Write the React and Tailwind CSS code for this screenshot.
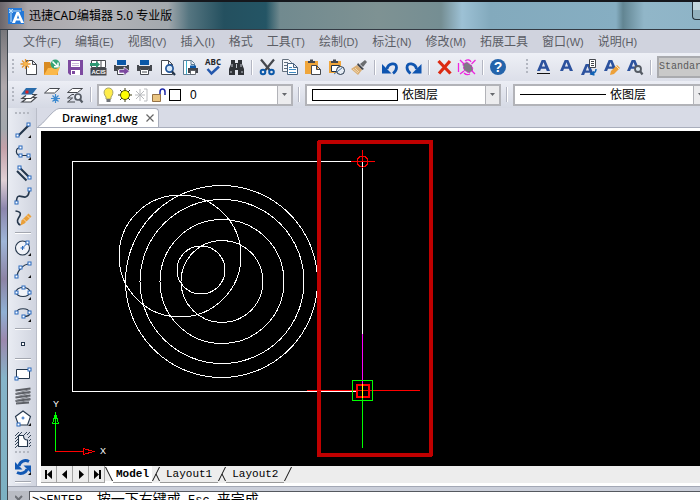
import React from "react";

const NAVY = "#24364b";
const BLUE = "#0b58a8";
const DARK = "#45484e";

/* ---------- toolbar glyphs, drawn on a 23 x 20 grid ---------- */

function Glyph({ children }) {
  return (
    <svg width="23" height="20" viewBox="0 0 23 20" fill="none" aria-hidden="true">
      {children}
    </svg>
  );
}

const Printer = () => (
  <>
    <path d="M7 3h9v5H7z" fill={BLUE} />
    <path d="M4 8h2v1h11V8h2v6h-3v-2H7v2H4z" fill={DARK} />
    <path d="M7.500 12.500h8v5h-8z" fill="#fff" stroke={DARK} />
    <path d="M9 15h5" stroke={DARK} />
  </>
);

const Page = () => <path d="M5.500 3.500h7l4 4v10h-11zM12.500 3.500v4h4" fill="#fff" stroke={DARK} />;

const LetterA = () => (
  <path d="M5 14 9.700 3h3.600L18 14h-3.200l-.9-2.300H9L8.100 14zM9.900 9.500h3.200l-1.600-4.300z" fill="#2c529e" fillRule="evenodd" />
);

const fileTools = [
  ["新建", <>
    <path d="M8.500 3.500h6l4 4v10h-10zM14.500 3.500v4h4" fill="#fff" stroke={DARK} />
    <path d="M7.500 2v10M2.500 7h10M4 3.500l7 7M11 3.500l-7 7" stroke="#e7962f" strokeWidth="1.300" />
    <circle cx="7.500" cy="7" r="2" fill="#f7b54a" />
  </>],
  ["打开", <>
    <path d="M3 5h6l1 2h7v11H3z" fill="#d98b22" />
    <path d="M7 11h3l1-1h8l-3 8H3z" fill="#fbb84a" />
    <circle cx="14.300" cy="7.300" r="4.700" fill="#33a577" />
    <path d="M11.500 4.500l5 5M17 5.500v4.200h-4" stroke="#fff" strokeWidth="1.500" />
  </>],
  ["保存", <>
    <path d="M4 3h15v15H6l-2-2z" fill="#7d4aa0" />
    <path d="M7 4h9v6H7zM7 13h9v5H7z" fill="#fff" />
    <path d="M8 14h3v3H8z" fill="#7d4aa0" />
    <path d="M8 6.500h7M8 8.500h7" stroke="#cbb9d9" />
  </>],
  ["ACIS 导入", <>
    <path d="M4.500 3.500h14v7h-14zM10 3.500v7M14 3.500v7" fill="#fff" stroke={DARK} />
    <path d="M3 6h6V4l4 3.500L9 11V9H3z" fill="#2d9873" />
    <path d="M3.500 11h16v7.500h-16z" fill={DARK} />
    <text x="4.500" y="17" fill="#fff" fontSize="6" fontWeight="700" fontFamily="Liberation Sans">ACIS</text>
  </>],
  ["输出", <>
    <Printer />
    <path d="M9 12.500h5V10l5.500 4.200-5.500 4.300V16H9z" fill="#7d4aa0" stroke="#eef0f6" strokeWidth=".7" />
  </>],
  ["打印", <Printer />],
  ["打印预览", <>
    <Page />
    <circle cx="13.500" cy="11.500" r="3.600" fill="#d8e8f7" stroke="#24579b" strokeWidth="1.700" />
    <path d="M16 14.500l3 3.500" stroke="#24364b" strokeWidth="2.200" />
  </>],
  ["页面设置", <>
    <path d="M4.500 3.500h8l3 3v11h-11zM12 3.500v4h3.500" fill="#fff" stroke="#5d7d95" />
    <path d="M7.500 4v13" stroke="#3db0cc" />
    <path d="M11 8.500h6V11h-6z" fill={BLUE} />
    <path d="M9 11h10v5H9z" fill={DARK} />
    <path d="M11.500 13.500h5v4h-5z" fill="#fff" stroke={DARK} strokeWidth=".7" />
  </>],
  ["拼写检查", <>
    <text x="11" y="8" textAnchor="middle" fill="#22252a" fontSize="8" fontWeight="700" fontFamily="Open Sans">ABC</text>
    <path d="M5.500 12l4 4.500 7.500-7" stroke="#2458ad" strokeWidth="2.500" />
  </>],
  ["查找", <>
    <path d="M6 3h4v3h3V3h4v4l2 5v6h-6v-5h-3v5H4v-6l2-5z" fill="#303338" />
    <path d="M7 7v3M16 7v3M6 14v2M17 14v2M11.500 7v4" stroke="#c2c7cf" />
  </>],
];

const editTools = [
  ["剪切", <>
    <path d="M5 2.500l9 11M18 2.500l-9 11" stroke={DARK} strokeWidth="2.200" />
    <circle cx="7" cy="15" r="2.300" stroke={BLUE} strokeWidth="2" />
    <circle cx="15.500" cy="15" r="2.300" stroke={BLUE} strokeWidth="2" />
  </>],
  ["复制", <>
    <path d="M3.500 2.500h6l3 3v9h-9z" fill="#f5f7fa" stroke="#64707d" />
    <path d="M5 5.500h4M5 8.500h4M5 11.500h4" stroke="#64707d" />
    <path d="M8.500 6.500h6l4 4v7h-10zM14.500 6.500v4h4" fill="#fff" stroke="#48627e" />
    <path d="M10 10.500h3M10 12.500h7M10 15.500h7" stroke="#3e89c1" />
  </>],
  ["粘贴", <>
    <path d="M3 4h13v13H3z" fill="#f0a63b" />
    <path d="M6 6V4h2V2.500h3V4h2v2z" fill={DARK} />
    <path d="M9.500 8.500h5l4 4v5h-9zM14.500 8.500v4h4" fill="#fff" stroke={DARK} />
  </>],
  ["粘贴为块", <>
    <path d="M4 4h12v12H4z" fill="#f0a63b" />
    <path d="M6 6V4h2V2.500h3V4h2v2z" fill={DARK} />
    <path d="M6.500 8.500h8l-2 6h-6z" fill="#fff" stroke={NAVY} />
    <circle cx="15.500" cy="13.500" r="4" fill="#e7edf5" stroke={NAVY} />
    <path d="M9 17l8-6" stroke="#527ca4" />
  </>],
  ["格式刷", <>
    <path d="M17 3l2 2-4 5-3-3z" fill="#6b6d70" />
    <path d="M10 6l6 6-2 1-5-5z" fill={DARK} />
    <path d="M9 8l5 5-4 5-7-6z" fill="#d9ae74" />
    <path d="M5 12l5 4M7 11l4 4" stroke="#f2d7ad" />
  </>],
];

const undoTools = [
  ["撤销", <>
    <path d="M8 12C9 6.500 17.500 4.500 17.500 10.500c0 2.500-1.500 4.500-3.500 6" stroke="#0f55b0" strokeWidth="2.800" />
    <path d="M3 7v9.500h9.500z" fill="#0f55b0" />
  </>],
  ["重做", <>
    <path d="M14.500 12C13.500 6.500 5 4.500 5 10.500c0 2.500 1.500 4.500 3.500 6" stroke="#0f55b0" strokeWidth="2.800" />
    <path d="M19.500 7v9.500H10z" fill="#0f55b0" />
  </>],
];

const eraseTools = [
  ["删除", <path d="M5.500 4l12 12.500M17 4L6 16.500" stroke="#dc2a12" strokeWidth="3.200" />],
  ["清理", <>
    <path d="M4 3l4 4M2.500 6v9M4 17l4-3M19.500 3l-4 4M19 17l-4-4M9 4c3-2 5-1 6 1M8 16c2 2 4 2 6 1" stroke="#ee25df" strokeWidth="1.300" />
    <path d="M7 7l4-2 5 4 1 4-4 3-5-3z" fill="#807a85" stroke="#e622d9" strokeDasharray="2 1" />
  </>],
];

const helpTools = [
  ["帮助", <>
    <circle cx="11" cy="10" r="8" fill="#2464ab" />
    <text x="11" y="15" textAnchor="middle" fontSize="14" fontWeight="700" fill="#fff" fontFamily="Liberation Sans">?</text>
  </>],
];

const textTools = [
  ["多行文字", <><LetterA /><path d="M5 16.500h13" stroke="#111" /></>],
  ["单行文字", <LetterA />],
  ["文字样式", <>
    <g transform="translate(-2 4)"><LetterA /></g>
    <path d="M11.500 2.500h6v8h-6z" fill="#fff" stroke={DARK} />
    <path d="M13 4.500h3M13 6.500h3M13 8.500h3" stroke={DARK} />
    <path d="M18 12c0 3-1 4-4 5M16 14.500l-3 2.500 3.500 1" stroke="#1163b5" strokeWidth="1.500" />
  </>],
  ["编辑文字", <>
    <g transform="translate(-2 0)"><LetterA /></g>
    <path d="M16 8l3 3-6 6-4 1 1-4z" fill="#eda13a" />
    <path d="M15 9l3 3" stroke="#fff" strokeWidth=".7" />
  </>],
  ["查找文字", <>
    <g transform="translate(-2 0)"><LetterA /></g>
    <circle cx="14" cy="12" r="3" fill="#d9e5ef" stroke="#555b64" strokeWidth="1.800" />
    <path d="M16 14l2.500 3.500" stroke="#555b64" strokeWidth="2.200" />
  </>],
];

const layerTools = [
  ["图层特性", <>
    <path d="M14 12.500h4l-5 4.500H4l4-3M14 9.500h4l-5 4H4l4-3" fill="#fff" stroke={DARK} strokeWidth="1.200" />
    <path d="M8 3h11l-5 6.500H3z" fill="#2a6cab" />
    <path d="M7.500 5.500h3v3h-3z" fill="#e02020" />
  </>],
  ["冻结图层", <>
    <path d="M8.500 3.500h10l-5 4.500h-10z" fill="#fff" stroke={DARK} />
    <path d="M14.500 9v9M10 13.500h9M11.500 10.500l6 6M17.500 10.500l-6 6" stroke="#3c8ad0" strokeWidth="1.200" />
  </>],
  ["浏览图层", <>
    <path d="M8.500 3.500h10l-5 4h-10z" fill="#fff" stroke={DARK} />
    <path d="M10 9.500H8L3.500 13H9M8 13.500L3.500 17H11" stroke={DARK} />
    <circle cx="14" cy="12" r="3" fill="#eef1f6" stroke="#555b64" strokeWidth="1.700" />
    <path d="M16 14.500l2.500 3" stroke="#555b64" strokeWidth="2.200" />
  </>],
];

/* ---------- drawing palette glyphs, 22 x 22 grid ---------- */

const Node = ({ x, y }) => <rect x={x - 1.500} y={y - 1.500} width="3" height="3" fill="#fff" stroke="#2869bd" />;
const Flyout = () => <path d="M19 16v3h-3z" fill="#111" />;

const lineTools = [
  ["直线", <><path d="M6 17L17 6" stroke={NAVY} strokeWidth="2.200" /><Node x={5.500} y={16.500} /><Node x={16.500} y={5.500} /><Flyout /></>],
  ["多段线", <><path d="M8.500 6.500C3 7 3 14 8.500 14.500h8" stroke={NAVY} strokeWidth="1.200" /><Node x={8.500} y={6.500} /><Node x={8.500} y={14.500} /><Node x={16.500} y={14.500} /><Flyout /></>],
  ["多线", <><path d="M5 8l9.500 9.500M8 5l9 9" stroke={NAVY} strokeWidth="2" /><Node x={7.500} y={4.500} /><Node x={17.500} y={14.500} /></>],
  ["样条曲线", <><path d="M4.500 17c0-10 6-4 9-5 4-1 3-4 4-7" stroke={NAVY} strokeWidth="1.600" /><Node x={4.500} y={17.500} /><Node x={17.500} y={4.500} /></>],
  ["徒手画", <><path d="M3.500 4c7 1 5 4 3 7s-1 6 2 7" stroke={NAVY} strokeWidth="1.600" /><path d="M16.500 6.500l3 3-7 7-4 2 1-5z" fill="#eaa03a" /><path d="M15 8.500l3 3M11.500 12l3 3" stroke="#fff" strokeWidth=".6" /></>],
];
const curveTools = [
  ["圆", <><circle cx="10.500" cy="11" r="7" fill="#f1f3f8" stroke={NAVY} strokeWidth="1.100" /><path d="M10.500 11l5-5M8.500 11h4M10.500 9v4" stroke="#2869bd" /><Node x={15.500} y={5.500} /><Flyout /></>],
  ["圆弧", <><path d="M4.500 18C6 11 10 6 17.500 4.500" stroke={NAVY} strokeWidth="1.200" /><Node x={4.500} y={17.500} /><Node x={8.500} y={8.500} /><Node x={17.500} y={4.500} /><Flyout /></>],
  ["椭圆", <><ellipse cx="11" cy="11" rx="7" ry="4.500" fill="#f1f3f8" stroke={NAVY} strokeWidth="1.100" /><Node x={4.500} y={11.500} /><Node x={11.500} y={6.500} /><Node x={17.500} y={11.500} /><Flyout /></>],
  ["椭圆弧", <><path d="M4.500 9.500c1-5 12-5 13 0 1 3-2 4-6 4" stroke={NAVY} strokeWidth="1.200" /><Node x={4.500} y={9.500} /><Node x={17.500} y={9.500} /><Node x={11.500} y={13.500} /><Flyout /></>],
];
const pointTools = [["点", <rect x="9.500" y="9.500" width="3" height="3" fill="#fff" stroke={NAVY} />]];
const shapeTools = [
  ["矩形", <><path d="M4.500 6.500h13v9h-13z" fill="#fff" stroke={NAVY} /><Node x={4.500} y={15.500} /><Node x={17.500} y={6.500} /></>],
  ["修订云线", <><path d="M3.500 5.500l15-2M3.500 9l15-2M3.500 12.500l15-2M3.500 16l15-2M4 18.500l13-1" stroke="#5c5f65" strokeWidth="2" /><path d="M18 4.500L4 8.500M18 8L4 12M18 11.500L4 15.500M18 15L5 18" stroke="#7f8288" /></>],
  ["多边形", <><path d="M11 4l7.500 5.500L15.500 18H6.500L3.500 9.500z" fill="#fff" stroke={NAVY} strokeWidth="1.100" /><path d="M9.500 11h3M11 9.500v3" stroke="#2869bd" /><Node x={6.500} y={17.500} /><Flyout /></>],
  ["图案填充", <><path d="M3 7l4-4M3 10l7-7M3 13L6 10M3 16l3-3M12 6l3-3M15 6l3-3M3 19l3-3M16 9l3-3M17 12l2-2M17 15l2-2M17 18l2-2" stroke={NAVY} strokeWidth=".9" /><path d="M6.500 6.500h5c0 3 1 4.500 4 4.500v6.500h-9z" fill="#fff" stroke={NAVY} strokeWidth="1.100" /></>],
];
const refreshTools = [
  ["重生成", <>
    <path d="M7 10C8 5 13 3.500 17 5.500" stroke="#1158b4" strokeWidth="3" />
    <path d="M3 6v7.500h7.500z" fill="#1158b4" />
    <path d="M15 13c-1 4-6 5.500-10 3.500" stroke="#1158b4" strokeWidth="3" />
    <path d="M19 17V9.500h-7.500z" fill="#1158b4" />
    <Flyout />
  </>],
];

/* ---------- building blocks ---------- */

function ToolGroup({ tools }) {
  return (
    <div className="flex shrink-0">
      {tools.map(([name, art]) => (
        <button key={name} type="button" aria-label={name} className="block h-5 w-[23px]">
          <Glyph>{art}</Glyph>
        </button>
      ))}
    </div>
  );
}

function PaletteGroup({ tools }) {
  return (
    <div className="flex flex-col">
      {tools.map(([name, art]) => (
        <button key={name} type="button" aria-label={name} className="block size-[22px]">
          <svg width="22" height="22" viewBox="0 0 22 22" fill="none" aria-hidden="true">{art}</svg>
        </button>
      ))}
    </div>
  );
}

const Grip = () => (
  <div className="flex w-2.5 shrink-0 justify-center">
    <div className="h-4 w-0.5 bg-[repeating-linear-gradient(to_bottom,#b3b7c1_0_2px,transparent_2px_4px)]" />
  </div>
);
const Sep = () => (
  <div className="flex w-2 shrink-0 justify-center">
    <div className="h-[15px] w-0.5 border-l border-[#b3b6c2] bg-white" />
  </div>
);
const PaletteSep = () => (
  <div className="flex h-2 items-center">
    <div className="h-0.5 w-4 border-t border-[#a3a7b0] bg-white" />
  </div>
);
const PaletteGrip = () => <div className="h-0.5 w-4 bg-[repeating-linear-gradient(to_right,#b4b8c1_0_2px,transparent_2px_4px)]" />;

function Combo({ label, value, className, children }) {
  return (
    <div className={`flex h-[22px] items-stretch border-2 border-[#b2b3b8] bg-white ${className}`}>
      <div className="flex min-w-0 flex-1 items-center pl-1">
        {children}
        <select aria-label={label} className="h-full min-w-0 flex-1 appearance-none bg-transparent pl-1 text-xs text-black outline-none">
          <option>{value}</option>
        </select>
      </div>
      <div className="flex w-3.5 shrink-0 items-center justify-center border-l border-[#b2b3b8] bg-[#ececee]">
        <svg width="5" height="3" viewBox="0 0 5 3" aria-hidden="true"><path d="M0 0h5L2.500 3z" fill="#66686d" /></svg>
      </div>
    </div>
  );
}

const menus = [
  ["文件", "(F)"], ["编辑", "(E)"], ["视图", "(V)"], ["插入", "(I)"], ["格式", ""], ["工具", "(T)"],
  ["绘制", "(D)"], ["标注", "(N)"], ["修改", "(M)"], ["拓展工具", ""], ["窗口", "(W)"], ["说明", "(H)"],
];

const circles = [
  [221.500, 281.500, 96], [222, 281.500, 82], [222, 281.500, 62], [222, 281.500, 41], [180, 256, 61], [201, 270, 24],
];

function Drawing() {
  return (
    <svg className="block min-h-0 w-full flex-1 bg-black" fill="none" role="img" aria-label="Drawing1.dwg" shapeRendering="crispEdges">
      <g transform="translate(-41 -131)">
        <g stroke="#fff">
          <path d="M362.500 334V161.500H72.500v230H357" />
          {circles.map(([cx, cy, r]) => <circle key={`${cx}-${r}`} cx={cx} cy={cy} r={r} />)}
        </g>
        <rect x="319" y="142" width="112" height="313" stroke="#c00000" strokeWidth="4" strokeLinejoin="round" />
        <g stroke="#f00">
          <circle cx="362.500" cy="161.500" r="5.500" />
          <path d="M351 161.500h24M362.500 150v11M307 390.500h113" />
          <rect x="357" y="385" width="12" height="12" strokeWidth="2" />
        </g>
        <path d="M362.500 334v51" stroke="#f0f" />
        <path d="M362.500 384v14" stroke="#ff0" />
        <path d="M362.500 398v50M352.500 380.500h20v20h-20z" stroke="#0f0" />
        <path d="M55.500 451V413M52.500 423.500h6l-3-10z" stroke="#0f0" />
        <path d="M55 451.500h28M83.500 448.500v6l10-3z" stroke="#f00" />
        <g fill="#fff" fontFamily="Liberation Sans" fontSize="9" textAnchor="middle">
          <text x="56" y="407">Y</text>
          <text x="103" y="454">X</text>
        </g>
      </g>
    </svg>
  );
}

const pagers = [
  ["第一页", "M4 3h2v9H4zM11 3v9L6 7.500z"],
  ["上一页", "M10 3v9L5 7.500z"],
  ["下一页", "M6 3v9l5-4.500z"],
  ["最后一页", "M5 3v9l5-4.500zM10 3h2v9h-2z"],
];

const Slash = ({ cross }) => (
  <svg width="8" height="17" viewBox="0 0 8 17" fill="none" stroke="#111" aria-hidden="true" className="shrink-0">
    <path d="M7.500 1L.5 15" />
    {cross && <path d="M4 8l3.500 7" />}
  </svg>
);

export default function App() {
  return (
    <div className="flex h-screen flex-col overflow-hidden bg-[#cfd2dc] font-['Liberation_Sans','Noto_Sans_CJK_SC',sans-serif] text-xs text-black">
      <header className="flex h-[30px] shrink-0 items-center border-t-2 border-b border-t-[#15171c] border-b-[#343b44] bg-[linear-gradient(90deg,#6b666b_0%,#aaa7ab_4%,#b4b4b8_14%,#a2a8ad_24%,#557580_27%,#24505f_32%,#245565_38%,#718a8f_40%,#7e9293_54%,#758e93_63%,#9dc1d5_66%,#83aabd_70%,#86aec2_88%,#628592_89%,#91b6c8_92%,#8eb4c7_100%)] pl-2">
        <svg width="16" height="16" viewBox="0 0 16 16" aria-hidden="true" className="shrink-0">
          <path d="M0 0h14v3h2v13H0z" fill="#2378d8" />
          <path d="M1 3h12M3 1v13M1 1l4 4M5 1L1 5" stroke="#bfe0fb" />
          <path d="M4 15L8.500 4h2.500L16 15h-3l-1-2.500H8L7 15zM8.800 10.500h2.500L10 7z" fill="#fff" fillRule="evenodd" />
        </svg>
        <h1 className="flex-1 pl-[5px] font-['Noto_Sans','Noto_Sans_CJK_SC',sans-serif] text-xs whitespace-nowrap">迅捷CAD编辑器 5.0 专业版</h1>
        <button type="button" aria-label="最小化" className="h-[18px] w-2 self-start rounded-bl border-b border-l border-[#25313a] bg-linear-to-b from-[#c3d6de] from-50% to-[#93b2bf] to-50%" />
      </header>

      <div className="flex min-h-0 flex-1">
        <div className="w-2 shrink-0 border-r border-l border-r-[#3b434b] border-l-[#555d66] bg-[linear-gradient(180deg,#77767b_0%,#b0a9ad_12%,#a3a8ad_21%,#c3a0a8_25%,#dfd0d5_32%,#8c86ad_38%,#9fb6d8_45%,#8c83a5_53%,#8fb0d4_60%,#9b88ad_66%,#86b4c9_74%,#7bb0c2_100%)]" />

        <div className="flex min-w-0 flex-1 flex-col">
          <nav className="flex h-[23px] shrink-0 items-center gap-3.5 overflow-hidden bg-[#d0d3de] pl-[15px] text-[#5b5d65]">
            {menus.map(([name, key]) => (
              <button key={name} type="button" className="flex shrink-0 items-center leading-5 whitespace-nowrap">
                {name}<span className="text-[11px]">{key}</span>
              </button>
            ))}
          </nav>

          <div className="flex h-7 shrink-0 items-center overflow-hidden bg-linear-to-b from-[#eef0f6] to-[#dcdfe9]">
            <Grip />
            <ToolGroup tools={fileTools} /><Sep />
            <ToolGroup tools={editTools} /><Sep />
            <ToolGroup tools={undoTools} /><Sep />
            <ToolGroup tools={eraseTools} /><Sep />
            <ToolGroup tools={helpTools} />
            <div className="w-3 shrink-0" />
            <Grip />
            <ToolGroup tools={textTools} /><Sep />
            <select aria-label="文字样式名" className="ml-0.5 h-[22px] min-w-[90px] flex-1 shrink-0 appearance-none border-2 border-[#a9aaae] bg-[#c9c9c9] font-['Liberation_Mono',monospace] text-[10px] text-[#5a5a5a]">
              <option>Standard</option>
            </select>
          </div>

          <div className="flex h-[27px] shrink-0 items-center overflow-hidden bg-linear-to-b from-[#eceef5] to-[#d5d9e4]">
            <Grip />
            <ToolGroup tools={layerTools} />
            <Sep />
            <Combo label="图层" value="0" className="ml-0.5 w-[196px] shrink-0">
              <svg width="79" height="16" viewBox="0 0 79 16" fill="none" aria-hidden="true" className="shrink-0">
                <path d="M3 10C-1 5 2 1 5.500 1S12 5 8 10v2H3z" fill="#ffed4a" stroke="#a5a26a" />
                <path d="M3.500 12h4v3h-4z" fill="#6f7378" />
                <path d="M22 1v14M15 8h14M17 3l10 10M27 3L17 13" stroke="#3a3a10" />
                <circle cx="22" cy="8" r="4.500" fill="#ff0" stroke="#55550a" />
                <path d="M37 2v12M32 8h10M33 4l8 8M41 4l-8 8M41 2h3v12h-3" stroke="#b9bbbe" />
                <path d="M57 9V5c0-4 5-4 5 0v3" stroke="#1d27a8" strokeWidth="1.500" />
                <path d="M49.500 7.500h8v7h-8z" fill="#eac583" stroke="#947146" />
                <path d="M66.500 2.500h11v11h-11z" stroke="#000" shapeRendering="crispEdges" />
              </svg>
              <span className="w-1 shrink-0" />
            </Combo>
            <div className="ml-0.5"><Sep /></div>
            <Combo label="颜色" value="依图层" className="ml-0.5 w-[196px] shrink-0">
              <div className="ml-px h-3 w-[86px] shrink-0 border border-black" />
            </Combo>
            <div className="ml-0.5"><Sep /></div>
            <Combo label="线型" value="依图层" className="ml-0.5 w-[196px] shrink-0">
              <div className="ml-px h-px w-[86px] shrink-0 bg-black" />
            </Combo>
          </div>

          <div className="flex min-h-0 flex-1">
            <aside className="flex w-[29px] shrink-0 flex-col items-center border-r border-[#b9bdc8] bg-linear-to-r from-[#e9ecf3] to-[#d0d4df] pt-1 pl-0.5">
              <PaletteGrip />
              <div className="h-[5px] shrink-0" />
              <PaletteGroup tools={lineTools} /><PaletteSep />
              <PaletteGroup tools={curveTools} /><PaletteSep />
              <PaletteGroup tools={pointTools} /><PaletteSep />
              <PaletteGroup tools={shapeTools} />
              <PaletteGrip />
              <div className="h-[3px] shrink-0" />
              <PaletteGroup tools={refreshTools} />
              <PaletteSep />
            </aside>

            <section className="flex min-w-0 flex-1 flex-col">
              <div className="flex h-5 shrink-0 items-end border-b border-[#a9aebc] bg-[#d8dbe6]">
                <svg width="22" height="19" viewBox="0 0 22 19" aria-hidden="true" className="shrink-0">
                  <path d="M1 19C6 17 16 1 22 .5V19z" fill="#fff" />
                  <path d="M1 18.500C6 17 16 1 22 .5" fill="none" stroke="#a9aebc" />
                </svg>
                <div className="flex h-[19px] items-center gap-2 rounded-tr-sm border-t border-r border-[#a9aebc] bg-white pr-1 pl-[3px]">
                  <a href="#drawing" className="font-['Open_Sans',sans-serif] text-[11px] leading-4 font-semibold">Drawing1.dwg</a>
                  <button type="button" aria-label="关闭" className="block">
                    <svg width="8" height="8" viewBox="0 0 8 8" aria-hidden="true"><path d="M.5.5l7 7M7.500.5l-7 7" stroke="#666" strokeWidth="1.200" /></svg>
                  </button>
                </div>
              </div>

              <div className="flex min-h-0 flex-1 flex-col border-t-[3px] border-b-[3px] border-l-4 border-white">
                <Drawing />
                <div className="flex h-[17px] shrink-0 items-stretch bg-[#ededed] font-['Liberation_Mono',monospace] text-[11px] leading-4">
                  {pagers.map(([name, d]) => (
                    <button key={name} type="button" aria-label={name} className="w-4 border-r border-b border-[#a3a3a3] bg-[#ececec]">
                      <svg width="15" height="15" viewBox="0 0 15 15" aria-hidden="true"><path d={d} /></svg>
                    </button>
                  ))}
                  <div className="flex bg-white">
                    <svg width="8" height="17" viewBox="0 0 8 17" aria-hidden="true"><path d="M0 0h1l7 15H0z" fill="#ededed" /><path d="M.5 1l7 14" stroke="#111" /></svg>
                    <button type="button" className="border-b border-[#999] px-[3px] font-bold">Model</button>
                  </div>
                  <Slash cross />
                  <button type="button" className="border-b border-[#999] px-1.5">Layout1</button>
                  <Slash cross />
                  <button type="button" className="border-b border-[#999] px-1.5">Layout2</button>
                  <Slash />
                </div>
              </div>
            </section>
          </div>

          <footer className="flex h-3.5 shrink-0 flex-col border-t border-[#a3a8b5]">
            <div className="h-1 shrink-0 bg-[#cbcfda]" />
            <div className="flex min-h-0 flex-1 overflow-hidden">
              <div className="flex w-[21px] shrink-0 justify-center bg-[#b9bcc4] pt-1">
                <svg width="8" height="8" viewBox="0 0 8 8" aria-hidden="true"><path d="M0 1l7 7M7 1L0 8" stroke="#6d7077" strokeWidth="2" /></svg>
              </div>
              <output className="h-8 flex-1 border-t border-l border-[#55585f] bg-white pl-0.5 font-['Liberation_Mono','Noto_Sans_CJK_SC',monospace] text-sm leading-4 whitespace-pre">
                <span className="text-xs">&gt;&gt;ENTER, </span>按一下右键或<span className="text-xs"> Esc </span>来完成
              </output>
            </div>
          </footer>
        </div>
      </div>
    </div>
  );
}
